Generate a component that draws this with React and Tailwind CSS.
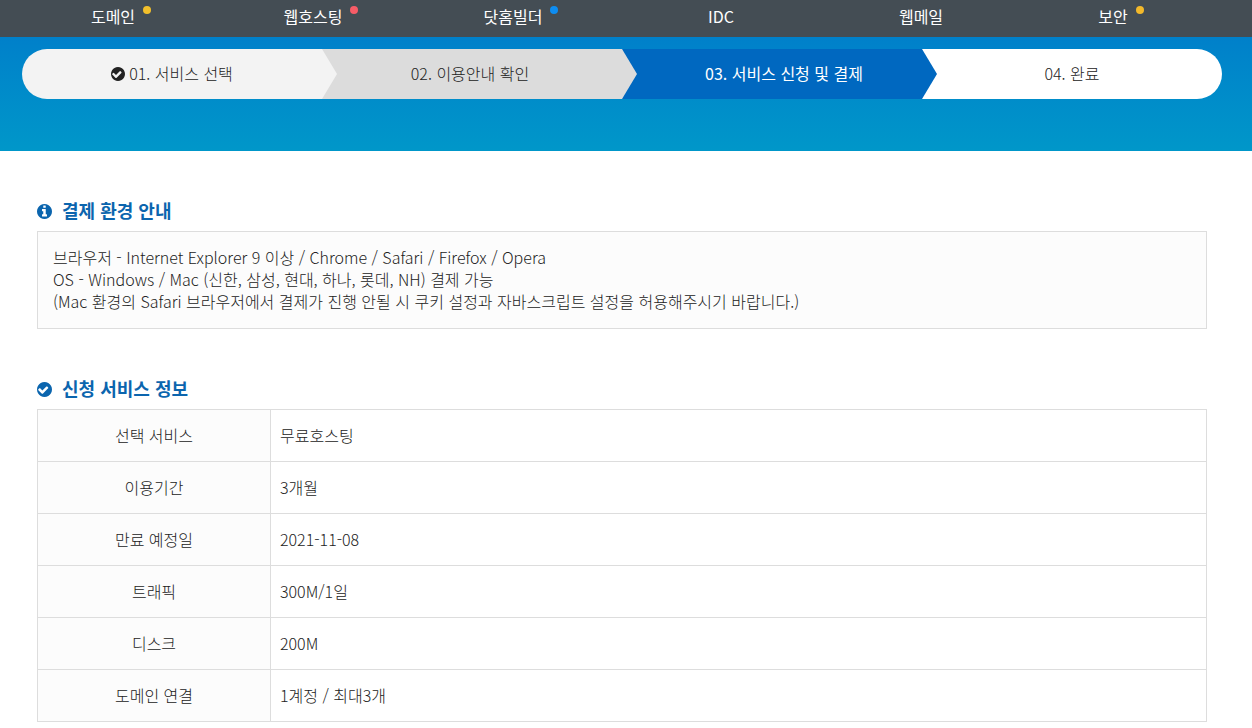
const menus = [
  { label: '도메인', dot: 'bg-[#f3c02b]' },
  { label: '웹호스팅', dot: 'bg-[#f75c67]' },
  { label: '닷홈빌더', dot: 'bg-[#0d8df2]' },
  { label: 'IDC' },
  { label: '웹메일' },
  { label: '보안', dot: 'bg-[#f3b92b]' },
];

const steps = [
  { label: '01. 서비스 선택', box: 'bg-[#f3f3f3] rounded-l-full z-30', arrow: 'bg-[#f3f3f3]', done: true },
  { label: '02. 이용안내 확인', box: 'bg-[#dcdcdc] pr-1 z-20', arrow: 'bg-[#dcdcdc]' },
  { label: '03. 서비스 신청 및 결제', box: 'bg-[#0068c0] text-white font-normal pl-6 z-10', arrow: 'bg-[#0068c0]', current: true },
  { label: '04. 완료', box: 'bg-white rounded-r-full' },
];

const rows = [
  ['선택 서비스', '무료호스팅'],
  ['이용기간', '3개월'],
  ['만료 예정일', '2021-11-08'],
  ['트래픽', '300M/1일'],
  ['디스크', '200M'],
  ['도메인 연결', '1계정 / 최대3개'],
];

const CheckIcon = ({ className }) => (
  <svg viewBox="128 128 1536 1536" fill="currentColor" aria-hidden="true" className={className}>
    <path d="M1284 734q0-28-18-46l-91-90q-19-19-45-19t-45 19l-408 407-226-226q-19-19-45-19t-45 19l-91 90q-18 18-18 46 0 27 18 45l362 362q19 19 45 19 27 0 46-19l543-543q18-18 18-45zm380 162q0 209-103 385.5t-279.5 279.5-385.5 103-385.5-103-279.5-279.5-103-385.5 103-385.5 279.5-279.5 385.5-103 385.5 103 279.5 279.5 103 385.5z" />
  </svg>
);

const InfoIcon = ({ className }) => (
  <svg viewBox="128 128 1536 1536" fill="currentColor" aria-hidden="true" className={className}>
    <path d="M1152 1376v-160q0-14-9-23t-23-9h-96v-512q0-14-9-23t-23-9h-320q-14 0-23 9t-9 23v160q0 14 9 23t23 9h96v320h-96q-14 0-23 9t-9 23v160q0 14 9 23t23 9h448q14 0 23-9t9-23zm-128-896v-160q0-14-9-23t-23-9h-192q-14 0-23 9t-9 23v160q0 14 9 23t23 9h192q14 0 23-9t9-23zm640 416q0 209-103 385.5t-279.5 279.5-385.5 103-385.5-103-279.5-279.5-103-385.5 103-385.5 279.5-279.5 385.5-103 385.5 103 279.5 279.5 103 385.5z" />
  </svg>
);

const SectionTitle = ({ icon: Icon, children }) => (
  <h2 className="flex items-center gap-2.5 h-8 mb-1 text-[18px] font-bold text-[#0b65ae]">
    <Icon className="w-[15px] h-[15px]" />
    <span className="pb-0.5">{children}</span>
  </h2>
);

const TopMenu = () => (
  <nav className="bg-[#444d54] pl-[21px] pr-[31px]">
    <ul className="flex max-w-[1200px] mx-auto">
      {menus.map((menu) => (
        <li key={menu.label} className="flex-1">
          <a href="#" className="flex justify-center h-[37px] pb-1 text-white font-normal leading-[33px]">
            {menu.label}
            {menu.dot && <span className={`w-2 h-2 mt-1.5 ml-2 rounded-full ${menu.dot}`} />}
          </a>
        </li>
      ))}
    </ul>
  </nav>
);

const StepBar = () => (
  <div className="bg-linear-to-b from-[#0080ca] to-[#0097c9] pt-3 pb-[52px] pl-[22px] pr-[30px]">
    <ol className="flex max-w-[1200px] mx-auto">
      {steps.map((step) => (
        <li
          key={step.label}
          aria-current={step.current ? 'step' : undefined}
          className={`relative flex w-1/4 items-center justify-center gap-1 h-[50px] ${step.box}`}
        >
          {step.done && <CheckIcon className="w-3.5 h-3.5" />}
          <span className="pb-0.5">{step.label}</span>
          {step.arrow && (
            <span className={`absolute left-full top-0 w-[15px] h-full [clip-path:polygon(0_0,100%_50%,0_100%)] ${step.arrow}`} />
          )}
        </li>
      ))}
    </ol>
  </div>
);

const App = () => {
  return (
    <div className="font-['Noto_Sans_CJK_KR','Noto_Sans',sans-serif] text-[16px] font-light text-[#222]" lang="ko">
      <TopMenu />
      <StepBar />
      <main className="pl-[37px] pr-[45px] pt-11">
        <div className="max-w-[1170px] mx-auto">
          <section className="mb-11">
            <SectionTitle icon={InfoIcon}>결제 환경 안내</SectionTitle>
            <p className="border border-[#ddd] bg-[#fcfcfc] px-[15px] pt-3.5 pb-4 leading-[22px]">
              브라우저 - Internet Explorer 9 이상 / Chrome / Safari / Firefox / Opera
              <br />
              OS - Windows / Mac (신한, 삼성, 현대, 하나, 롯데, NH) 결제 가능
              <br />
              (Mac 환경의 Safari 브라우저에서 결제가 진행 안될 시 쿠키 설정과 자바스크립트 설정을 허용해주시기 바랍니다.)
            </p>
          </section>
          <section>
            <SectionTitle icon={CheckIcon}>신청 서비스 정보</SectionTitle>
            <table className="w-full border-collapse">
              <tbody>
                {rows.map(([name, value]) => (
                  <tr key={name} className="h-[52px]">
                    <th scope="row" className="w-[233px] border border-[#ddd] bg-[#fcfcfc] pb-0.5 font-light text-center">
                      {name}
                    </th>
                    <td className="border border-[#ddd] px-[9px] pb-0.5">{value}</td>
                  </tr>
                ))}
              </tbody>
            </table>
          </section>
        </div>
      </main>
    </div>
  );
};

export default App;
